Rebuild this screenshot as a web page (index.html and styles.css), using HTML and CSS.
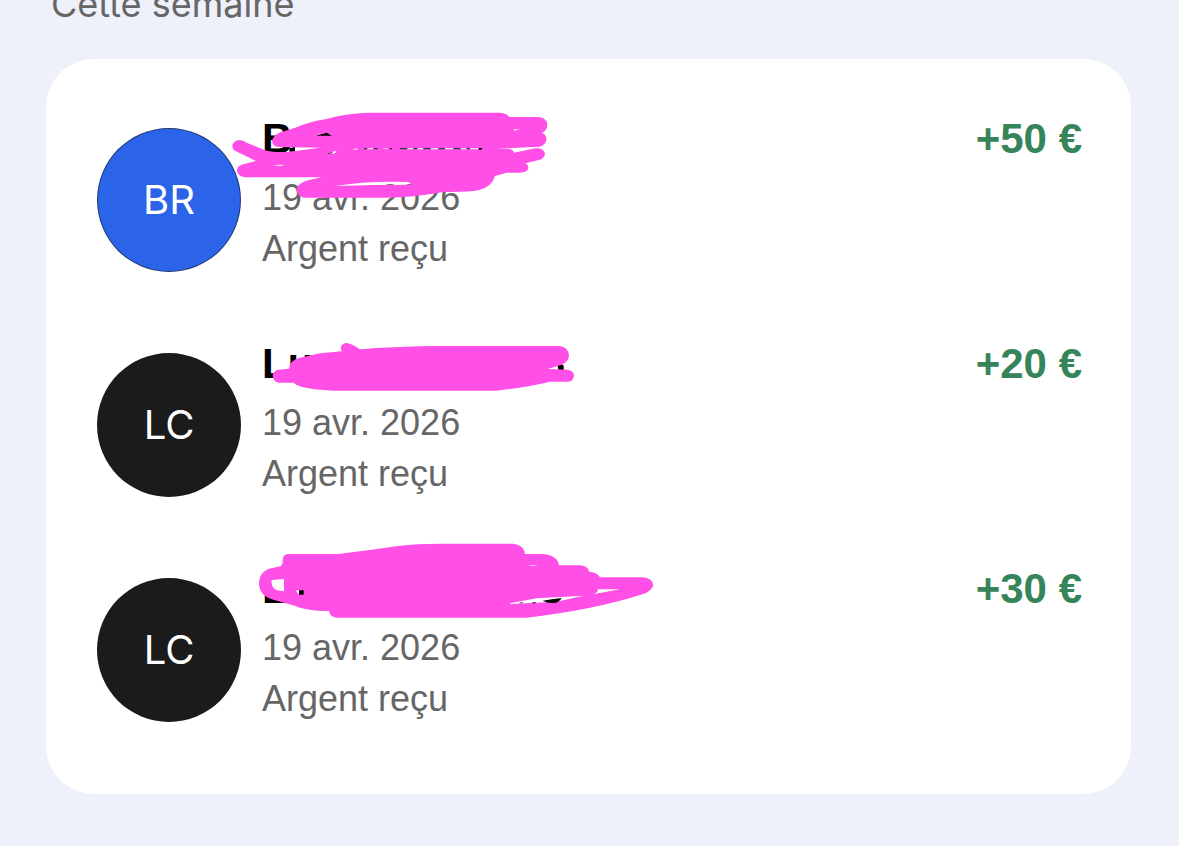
FILE: index.html
```html
<!DOCTYPE html>
<html lang="fr">
  <head>
    <meta charset="utf-8">
    <title>Cette semaine</title>
    <link rel="stylesheet" href="styles.css">
  </head>
  <body>
    <h2 class="period">Cette semaine</h2>
    <ul class="card">
      <li class="row">
        <div class="avatar blue">BR</div>
        <div class="details">
          <div class="name">B
            <svg class="scribble" viewBox="30 -30 1296 330" aria-hidden="true">
              <path class="ink" d="M208 145L225 140L225 155L208 155Z M285 108L322 97L335 106L365 108L365 111L285 110Z M315 161L340 155L330 162Z"/>
              <path class="pink" fill-rule="evenodd" d="M58 120Q70 120 80 128L135 151Q160 159 210 155L300 143L180 141Q158 142 156 124Q158 107 178 98L230 82Q265 65 320 57Q375 40 445 38H840Q862 40 868 51H955Q981 54 982 74Q981 92 965 99Q980 103 979 119Q977 136 958 140L830 146H865Q880 148 882 158L945 145Q969 142 975 160Q974 175 960 179L916 190Q928 196 924 208Q918 218 900 218H860L825 228Q817 260 775 271Q745 277 670 276Q580 293 500 293H250Q229 285 230 266Q235 247 270 239L305 232H75Q52 229 51 211Q52 195 75 191L108 183L48 154Q36 148 37 135Q42 121 58 120Z M285 107L320 98L336 107Z M318 161L350 152L345 160Z M396 148L412 145V149Z M432 145H475V148H432Z M486 145L516 147L498 148Z M540 145H785V148H540Z M880 88L900 88L883 92Z M155 195L195 194L180 198Z M345 258Q440 242 565 246L575 254Q470 254 345 258Z"/>
              <path class="ink" d="M432 145h10v3h-10z M460 145h14v3h-14z M508 145h8v3h-8z M540 145h22v3h-22z M580 145h12v3h-12z M610 145h22v3h-22z M655 145h20v3h-20z M700 145h22v3h-22z M740 145h10v3h-10z M776 144h10v5h-10z"/>
            </svg>
          </div>
          <div class="info">19 avr. 2026</div>
          <div class="info">Argent reçu</div>
        </div>
        <div class="amount">+50 €</div>
      </li>
      <li class="row">
        <div class="avatar">LC</div>
        <div class="details">
          <div class="name">Lu
            <svg class="scribble" viewBox="-60 -45 1296 330" aria-hidden="true">
              <path class="ink" d="M922 104Q932 98 941 107V124H926Z"/>
              <path class="pink" d="M85 119L117 116Q120 90 150 83L210 70L275 64Q267 43 288 39Q300 38 330 58Q430 50 540 48H930Q957 53 957 77Q956 95 933 105L893 117L955 119Q972 123 972 137Q970 153 955 155H900Q830 172 740 182H250Q165 178 140 165L130 158H85Q69 153 68 137Q70 122 85 119Z"/>
            </svg>
          </div>
          <div class="info">19 avr. 2026</div>
          <div class="info">Argent reçu</div>
        </div>
        <div class="amount">+20 €</div>
      </li>
      <li class="row">
        <div class="avatar">LC</div>
        <div class="details">
          <div class="name">L
            <svg class="scribble" viewBox="-60 30 1296 330" aria-hidden="true">
              <path class="pink" fill-rule="evenodd" d="M113 72H265Q360 60 450 47Q500 41 570 41H790Q823 45 825 72H880Q922 76 927 106H990Q1016 109 1017 125Q1043 127 1050 142H1180Q1209 146 1210 166Q1204 184 1180 192Q1030 240 830 263H260Q240 262 237 243Q165 242 135 227L80 212Q28 202 27 160Q29 119 70 113L92 109L98 98Q96 74 113 72Z M64 150L102 147V184L82 181Q63 175 64 150Z M138 182L148 180L162 194L144 191Z M1044 178L1110 178L1030 193Q1044 188 1044 178Z M780 220L860 205L1000 197L920 215L780 222Z M830 106H865L850 108Z"/>
              <path class="ink" d="M147 181H161V194H147Z M808 218L821 217L816 220H808Z M846 218L858 216L855 220H846Z M878 212Q905 207 935 204Q926 220 907 219Q890 219 878 212Z"/>
            </svg>
          </div>
          <div class="info">19 avr. 2026</div>
          <div class="info">Argent reçu</div>
        </div>
        <div class="amount">+30 €</div>
      </li>
    </ul>
  </body>
</html>
```
FILE: styles.css
```css
body {
  margin: 0;
  background-color: #eef1fa;
  font-family: "Liberation Sans", Arial, sans-serif;
  color: #666;
  display: flow-root;
}

.period {
  margin: -18px 51px 33px;
  font-family: Inter, sans-serif;
  font-size: 36px;
  font-weight: 400;
  line-height: 44px;
}

.card {
  margin: 0 48px 52px 46px;
  padding: 30px 49px 30px 51px;
  list-style: none;
  background-color: white;
  border-radius: 48px;
}

.row {
  display: flex;
  align-items: flex-start;
  padding: 25px 0 40px;
}

.avatar {
  flex: none;
  width: 144px;
  height: 144px;
  margin-top: 14px;
  box-sizing: border-box;
  border: 1px solid rgba(27, 27, 27, 0.6);
  border-radius: 50%;
  background-color: #1b1b1b;
  color: white;
  font-family: Inter, sans-serif;
  font-size: 40px;
  line-height: 142px;
  text-align: center;
}

.avatar.blue {
  background-color: #2b64e9;
}

.details {
  flex: 1;
  margin-left: 21px;
}

.name {
  position: relative;
  margin-bottom: 8px;
  color: black;
  font-size: 42px;
  font-weight: bold;
  line-height: 50px;
}

.info {
  font-size: 36px;
  line-height: 51px;
}

.amount {
  color: #36855a;
  font-size: 42px;
  font-weight: bold;
  line-height: 50px;
}

/* marker strokes lie over the name and part of the date */
.scribble {
  position: absolute;
  left: -32px;
  top: -24px;
  width: 432px;
  height: 110px;
}

.pink {
  fill: #ff4fe6;
}

.ink {
  fill: black;
}
```
